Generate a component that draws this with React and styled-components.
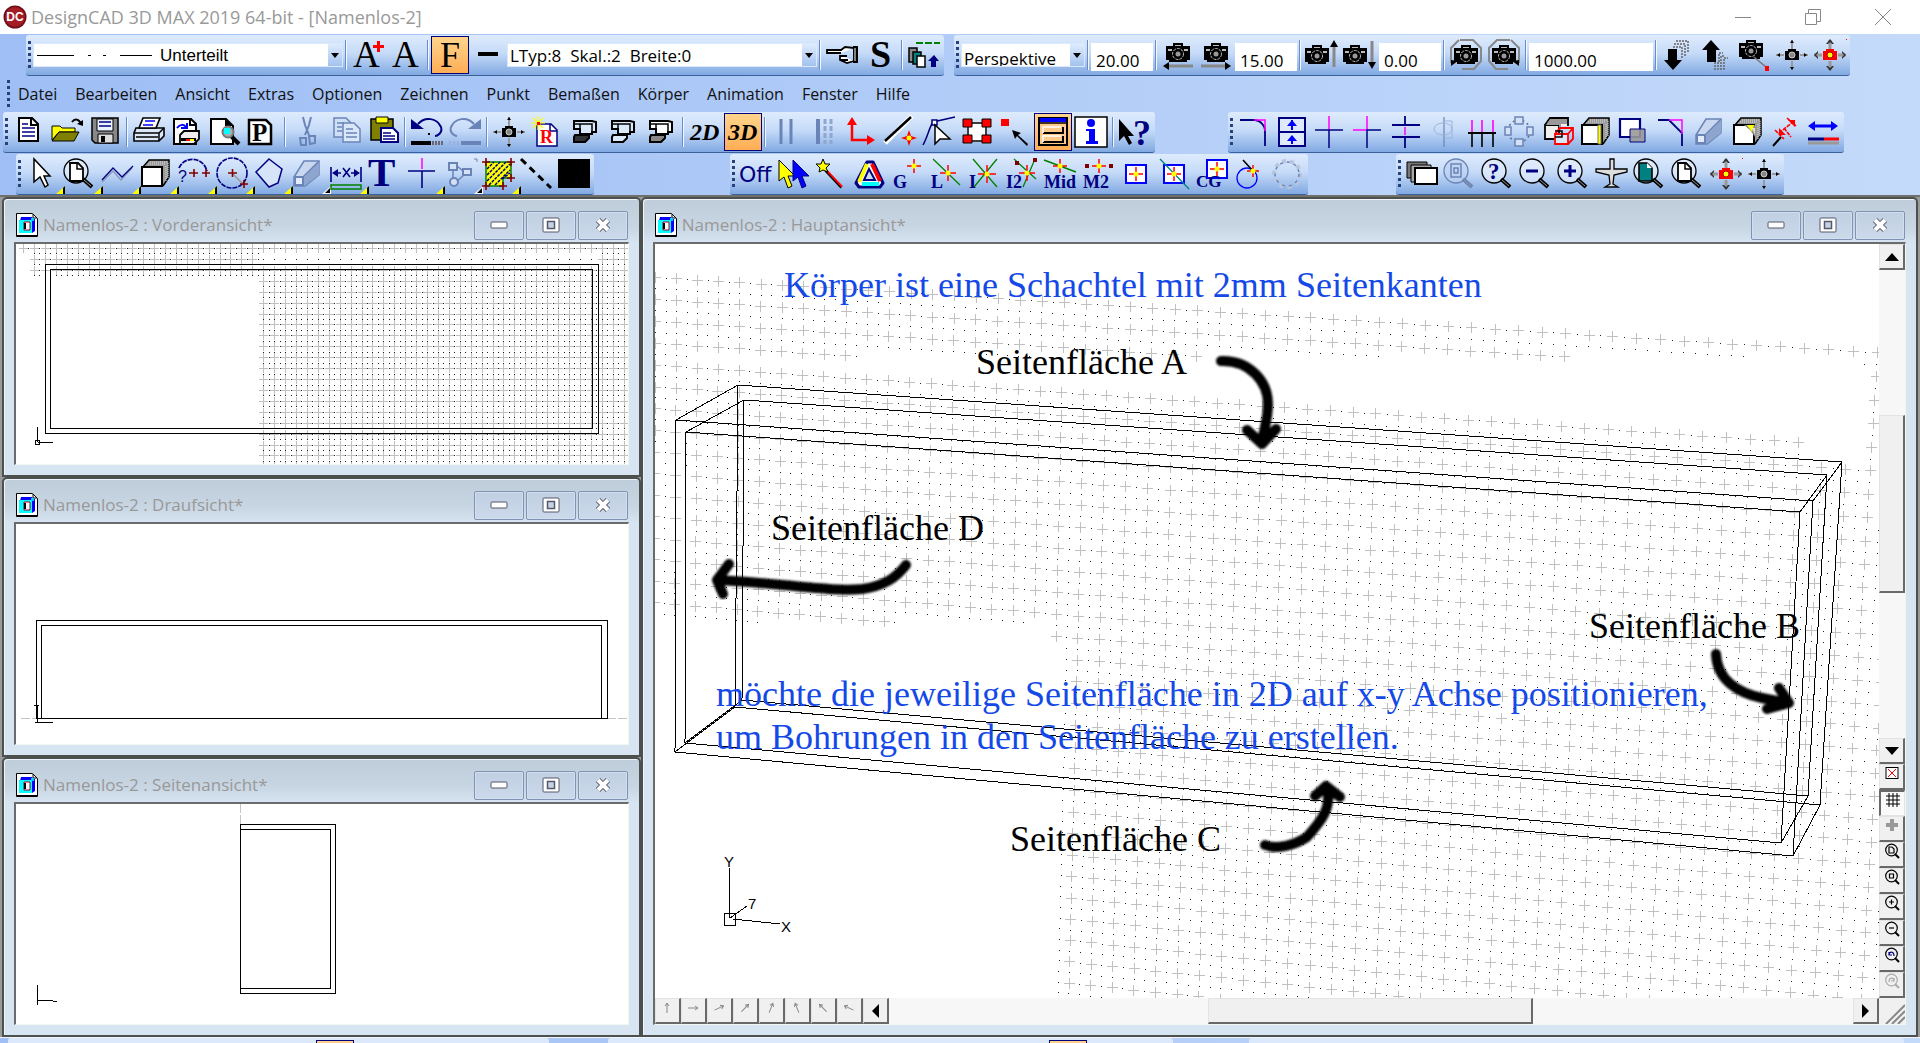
import React from 'react';
import styled, { createGlobalStyle, css } from 'styled-components';

const GlobalStyle = createGlobalStyle`
  html, body, #root {
    height: 100%;
    margin: 0;
  }
  body {
    overflow: hidden;
    font-family: "Open Sans", "Noto Sans", sans-serif;
    font-size: 17px;
    color: #000;
  }
  * {
    box-sizing: border-box;
  }
  button, input, select {
    font: inherit;
    color: inherit;
    padding: 0;
    margin: 0;
    border: 0;
    border-radius: 0;
    background: none;
  }
`

/* ---------- layout ---------- */

const Shell = styled.div`
  display: flex;
  flex-direction: column;
  height: 100vh;
  background: linear-gradient(90deg, #9ebef5, #c4dafa);
`

const TitleBar = styled.header`
  display: flex;
  align-items: center;
  flex: none;
  height: 34px;
  padding: 0 2px 0 3px;
  background: #fff;
  color: #999;
`

const AppTitle = styled.h1`
  flex: 1;
  margin: 0 0 0 4px;
  font-size: 18px;
  font-weight: 400;
  line-height: 24px;
  white-space: nowrap;
`

const TitleButton = styled.button`
  display: flex;
  align-items: center;
  justify-content: center;
  width: 70px;
  height: 34px;
`

const BarRow = styled.div`
  display: flex;
  flex: none;
  height: 42px;
  padding: 1px 0 0 ${p => p.$indent}px;
`

const Toolbar = styled.div`
  display: flex;
  align-items: center;
  flex: none;
  height: 41px;
  margin-right: ${p => p.$after || 0}px;
  padding-right: 1px;
  border-bottom: 1px solid #3b619c;
  border-radius: 3px;
  background: linear-gradient(#deebfd, #c6dbf8 45%, #81a9e2);
`

const Grip = styled.span`
  flex: none;
  width: 3px;
  height: 28px;
  margin: 0 2px;
  background: repeating-linear-gradient(#27417b 0 3px, transparent 3px 6px);
`

const Sep = styled.span`
  flex: none;
  width: 2px;
  height: 30px;
  margin: 0 2px;
  background: linear-gradient(90deg, #6a8ccb 50%, #f1f9ff 50%);
`

const ToolButton = styled.button`
  position: relative;
  display: flex;
  align-items: center;
  justify-content: center;
  flex: none;
  width: 38px;
  height: 38px;
  ${p => p.$active && css`
    border: 1px solid #000080;
    background: linear-gradient(#ffd58c, #ffad55);
  `}
`

const Corner = styled.svg`
  position: absolute;
  right: -4px;
  bottom: -1px;
`

const MenuBar = styled.nav`
  display: flex;
  align-items: center;
  flex: none;
  gap: 18px;
  height: 35px;
  padding-left: 5px;
  font-size: 16px;
`

const MenuItem = styled.a`
  color: #111;
  line-height: 24px;
  text-decoration: none;
  &:first-of-type {
    margin-left: -12px;
  }
`

const Combo = styled.div`
  display: flex;
  align-items: center;
  flex: none;
  width: ${p => p.$width}px;
  height: 24px;
  padding: 0 0 0 2px;
  border: 1px solid #d9e8fb;
  background: #fff;
  overflow: hidden;
  font-family: ${p => p.$arial ? '"Liberation Sans", sans-serif' : 'inherit'};
`

const ComboSelect = styled.select`
  flex: 1;
  min-width: 0;
  height: 22px;
  padding-top: ${p => p.$low ? 6 : 0}px;
  padding-left: ${p => p.$pad || 0}px;
  appearance: none;
  outline: none;
  ${p => p.$low && css`
    height: 30px;
  `}
`

const ComboArrow = styled.span`
  display: flex;
  align-items: center;
  justify-content: center;
  flex: none;
  width: 14px;
  height: 22px;
  background: linear-gradient(#deebfd, #a3c2ef);
`

const NumberBox = styled.input`
  flex: none;
  width: ${p => p.$width}px;
  height: 28px;
  padding: 6px 0 0 4px;
  border: 1px solid #fff;
  background: #fff;
  align-self: flex-end;
  margin-bottom: 4px;
  outline: none;
`

const Mdi = styled.main`
  display: grid;
  grid-template-columns: 1fr 2fr;
  flex: 1;
  min-height: 0;
  padding: 0 2px;
  border-top: 2px solid #6f6f6b;
  border-bottom: 1px solid #f0f4fa;
  background: #9a9a9a;
`

const SideViews = styled.div`
  display: grid;
  grid-template-rows: repeat(3, 1fr);
  min-height: 0;
`

const Frame = styled.section`
  display: flex;
  flex-direction: column;
  min-width: 0;
  min-height: 0;
  padding: 0 10px 10px;
  border: 2px solid #4d514d;
  border-radius: 5px 5px 0 0;
  background: linear-gradient(#bfcddb, #c8d5e2 28px, #d7e4f2 44px);
  box-shadow: inset 1px 1px 0 #eef4fa;
`

const FrameTitle = styled.div`
  display: flex;
  align-items: center;
  flex: none;
  gap: 2px;
  height: 43px;
  padding: 9px 1px 0 2px;
`

const FrameName = styled.h2`
  flex: 1;
  margin: 0 0 0 3px;
  color: #999;
  font-size: 17px;
  font-weight: 400;
  line-height: 24px;
  white-space: nowrap;
`

const FrameButton = styled.button`
  display: flex;
  align-items: center;
  justify-content: center;
  width: 50px;
  height: 29px;
  border: 1px solid #8093b4;
  border-radius: 2px;
  background: linear-gradient(#c0cfe2, #cbd9ea);
  box-shadow: inset 0 0 0 1px #d3dfee;
`

const Sunken = styled.div`
  flex: 1;
  display: grid;
  grid-template-columns: ${p => p.$scroll ? 'minmax(0, 1fr) 26px' : 'minmax(0, 1fr)'};
  grid-template-rows: ${p => p.$scroll ? 'minmax(0, 1fr) 26px' : 'minmax(0, 1fr)'};
  min-height: 0;
  border: solid;
  border-width: 2px 1px 1px 2px;
  border-color: #6b6b6b #f4f4f4 #f4f4f4 #6b6b6b;
  background: #fff;
`

const Canvas = styled.svg`
  display: block;
  width: 100%;
  height: 100%;
  overflow: hidden;
`

const Note = styled.text`
  font-family: "Liberation Serif", serif;
  font-size: 36px;
  fill: ${p => p.$blue ? '#1449e8' : '#000'};
`

const AxisLetter = styled.text`
  font-family: "Liberation Sans", sans-serif;
  font-size: 15px;
`

const ScrollColumn = styled.div`
  display: flex;
  flex-direction: column;
  min-height: 0;
`

const ScrollRow = styled.div`
  display: flex;
  min-width: 0;
`

const Track = styled.div`
  display: grid;
  flex: 1;
  grid-template-columns: ${p => p.$vertical ? '1fr' : '320fr 325fr 320fr'};
  grid-template-rows: ${p => p.$vertical ? '145fr 178fr 145fr' : '1fr'};
  background: #f7f7f7;
`

const Thumb = styled.div`
  grid-column: ${p => p.$vertical ? 1 : 2};
  grid-row: ${p => p.$vertical ? 2 : 1};
  border: solid;
  border-width: 1px 2px 2px 1px;
  border-color: #e3e3e3 #696969 #696969 #e3e3e3;
  background: #f0f0f0;
`

const ScrollButton = styled.button`
  display: flex;
  align-items: center;
  justify-content: center;
  flex: none;
  width: 26px;
  height: 26px;
  padding-bottom: ${p => p.$raise || 0}px;
  border: solid;
  border-width: 1px 2px 2px 1px;
  border-color: #e3e3e3 #696969 #696969 #e3e3e3;
  background: #f0f0f0;
  ${p => p.$pressed && css`
    border-width: 2px 1px 1px 2px;
    border-color: #696969 #e3e3e3 #e3e3e3 #696969;
    background: #fafafa;
  `}
`

const SizeGrip = styled.div`
  display: flex;
  align-items: flex-end;
  justify-content: flex-end;
  background: #f0f0f0;
`

const NextBars = styled.footer`
  display: flex;
  flex: none;
  height: 5px;
  padding: 0 16px 0 8px;
`

const NextBar = styled.div`
  flex: ${p => p.$grow} 1 0;
  display: flex;
  align-items: flex-end;
  margin-right: ${p => p.$after || 0}px;
  border-radius: 3px 3px 0 0;
  background: #dce9fc;
`

const NextActive = styled.span`
  width: 38px;
  height: 3px;
  margin-left: ${p => p.$at}%;
  border: 1px solid #000080;
  border-bottom: 0;
  background: #ffd08a;
`

/* ---------- icons, all drawn in a 32x32 box ---------- */

const NAVY = '#000080'
const OFF = '#6b84b8'

const L = ({ d, c = '#000', w = 2, f = 'none', ...rest }) => (
  <path d={d} stroke={c} strokeWidth={w} fill={f} {...rest} />
)

const T = ({ x, y, s, c = '#000', font = 'Liberation Serif', ...rest }) => (
  <text x={x} y={y} fontSize={s} fill={c} fontFamily={`"${font}", serif`} {...rest}>{rest.children}</text>
)

const Star = ({ x, y, r = 8 }) => (
  <>
    <L d={`M${x - r} ${y}H${x + r}M${x} ${y - r}V${y + r}`} c="#f00" w={1.5} />
    <circle cx={x} cy={y} r="2.5" fill="#ff0" />
  </>
)

const Camera = ({ x = 4, y = 4 }) => (
  <g transform={`translate(${x} ${y})`}>
    <path d="M7 0h10v3h7v14h-3v2H3v-2H0V3h7z" />
    <path d="M9 2h6v1H9zM2 6h4v2H2zM18 6h4v2h-4z" fill="#bbb" />
    <circle cx="12" cy="11" r="5.5" fill="none" stroke="#bbb" strokeDasharray="3 1" />
    <circle cx="12" cy="11" r="2.5" fill="#999" />
  </g>
)

const MoveCamera = ({ red }) => (
  <>
    <L d="M16 1v9M16 22v9M0 16h8M24 16h8" c="#999" w={red ? 3 : 2} />
    {red
      ? <path d="M12 5l4-5 4 5h-2l-2-2-2 2zM12 27l4 5 4-5h-2l-2 2-2-2zM4 12l-4 4 4 4v-2l-2-2 2-2zM28 12l4 4-4 4v-2l2-2-2-2z" fill="#333" />
      : <path d="M14 4l2-3 2 3zM14 28l2 3 2-3zM4 14l-3 2 3 2zM28 14l3 2-3 2z" />}
    <path d="M9 12h3v-2h8v2h3v9H9z" fill={red ? '#f00' : '#000'} />
    <circle cx="16" cy="16" r="3" fill={red ? '#ff0' : '#888'} stroke={red ? '#a00' : '#ccc'} />
  </>
)

const Lens = ({ c = '#000', f = '#e6f0fd', children }) => (
  <>
    <circle cx="12" cy="13" r="12" fill={f} fillOpacity="0.6" stroke={c} strokeWidth="1.3" />
    {children}
    <L d="M19 21l9 8" c={c} w={4} />
    <L d="M20 22l7 6" c="#999" w={1} />
  </>
)

const Plates = ({ back = '#dce9fb', front = '#dce9fb' }) => (
  <>
    <path d="M5 5h18l4 1v10h-4v2H11v-5H5z" fill={back} stroke="#000" strokeWidth="2" />
    <L d="M5 8h18v10M11 8v5" w={1.5} />
    <path d="M6 19h14v3l-4 4H5v-5z" fill={front} stroke="#000" strokeWidth="2" />
  </>
)

const Cube = ({ f = '#fff', children }) => (
  <>
    <path d="M3 9L9 2h20v17l-6 9" fill="#999" stroke="#000" strokeWidth="1.5" />
    <L d="M10 4h18M8 6h18M26 8v15M28 5v15" c="#ddd" w={1} strokeDasharray="1 1" />
    <L d="M2 9h20v19H2z" f={f} />
    {children}
  </>
)

const Wedge = () => (
  <>
    <path d="M2 19L12 3h15v14l-14 11H2z" fill="#c9d8ee" stroke={OFF} strokeWidth="1.5" />
    <path d="M12 19L27 3v14L12 28z" fill="#8da5cf" />
    <L d="M3 19h8v8H3z" c={OFF} w={2} f="#e0eafa" />
    <L d="M11 19L27 3" c={OFF} w={1.5} />
  </>
)

const icons = {
  fontPlus: <><T x="1" y="28" s="37">A</T><path d="M21 6h4V2h3v4h4v3h-4v4h-3v-4h-4z" fill="#f00" /></>,
  font: <T x="2" y="28" s="37">A</T>,
  fontF: <T x="6" y="28" s="36">F</T>,
  dash: <L d="M6 15h20" w={4} />,
  hand: <><L d="M28 9l-9-1-4 3H1v3h14M28 22l-7 2-7-3v-5M14 17h7M15 21h7" f="#fff" w={1.8} /><path d="M27 7h5v17h-5z" /><L d="M29 9v13" c="#fff" w={1} /></>,
  bigS: <T x="6" y="28" s="38" fontWeight="700">S</T>,
  layers: (
    <>
      <L d="M8 4h24" c="#008000" w={2} strokeDasharray="7 2" />
      <L d="M1 9h8v14H1z" w={1.5} f="#888" /><L d="M5 13h8v12H5z" w={1.5} f="#008080" /><L d="M9 17h8v11H9z" w={1.5} f="#fff" />
      <path d="M26 16l5 6h-3v6h-5v-6h-3z" fill={NAVY} />
    </>
  ),
  camLeft: <><Camera /><L d="M5 27h26" c="#888" w={3} /><path d="M7 23v8l-6-4z" /></>,
  camRight: <><Camera /><L d="M1 27h26" c="#888" w={3} /><path d="M25 23v8l6-4z" /></>,
  camUp: <><Camera x="-1" y="6" /><L d="M28 6v22" c="#888" w={3} /><path d="M24 8h8l-4-7z" /></>,
  camDown: <><Camera x="-1" y="6" /><L d="M28 2v22" c="#888" w={3} /><path d="M24 23h8l-4 7z" /></>,
  orbitL: <><L d="M10 1h13l8 8v13l-7 8H12M1 24V9l8-8" c="#888" w={2} /><Camera x="4" y="6" /><path d="M1 27v-6l7 1z" /></>,
  orbitR: <><L d="M22 1H9L1 9v13l7 8h12M31 24V9l-8-8" c="#888" w={2} /><Camera x="4" y="6" /><path d="M31 27v-6l-7 1z" /></>,
  backward: <><L d="M14 2h12v12M12 5h11v12M11 8h9v11" c="#666" w={1.5} strokeDasharray="2 1" /><path d="M6 10h9v11h5l-9 10-9-10h4z" /></>,
  forward: <><L d="M14 30h10V19h4M14 27h7V17h4M14 24h5V14h4" c="#666" w={1.5} strokeDasharray="2 1" /><path d="M11 1l9 10h-4v12H7V11H2z" /></>,
  camTarget: <><Camera x="1" y="1" /><L d="M16 18l12 10" c="#777" w={1.5} /><path d="M27 27h4v5h-4z" fill="#f00" /></>,
  moveCam: <MoveCamera />,
  moveCamRed: <><MoveCamera red /><path d="M32 0h1v1h-1z" fill="#f00" /></>,

  newDoc: <><L d="M6 2h13l6 6v17H6z" f="#fff" w={2} /><L d="M18 2v7h7" w={2} /><L d="M9 8h6M9 12h13M9 16h13M9 20h13" c={NAVY} w={1.6} /></>,
  open: (
    <>
      <path d="M1 24V10h8l2 2h13v4H8z" fill="#ff0" stroke="#000" />
      <path d="M1 25l7-9h20l-5 9z" fill="#808000" stroke="#000" />
      <L d="M21 6c3-4 7-3 9 2" w={2} /><path d="M26 8l6-4v6z" />
    </>
  ),
  save: <><path d="M3 2h26v25H6l-3-3z" fill="#888" stroke="#000" strokeWidth="1.5" /><path d="M8 3h16v12H8z" fill="#e8f1fd" stroke="#000" /><L d="M10 6h12M10 10h12" c={NAVY} w={1.6} /><path d="M9 18h15v9H9z" fill="#ddd" stroke="#000" /><path d="M12 20h4v6h-4z" /></>,
  print: <><L d="M3 12h24l4 0v8l-5 5H1v-8z" f="#dce8f8" w={1.6} /><L d="M10 2h17l-4 10H6z" f="#fff" w={1.6} /><L d="M12 5h10M10 9h10" c="#00f" w={1.6} /><L d="M1 17h25v8M26 17l5-5M3 21h22" w={1.5} /></>,
  printDoc: <><L d="M3 3h17l5 5v20H3z" f="#fff" /><L d="M19 3v6h6" /><L d="M6 12c3-4 7-4 9-1M16 7v5h-6" c="#00f" w={2} /><path d="M9 19l4-4h15v8l-5 5H9z" fill="#eee" stroke="#000" strokeWidth="1.8" /><path d="M10 22h15v3H10z" /><path d="M15 23h4v2h-4z" fill="#f00" /><path d="M19 23h4v2h-4z" fill="#ff0" /></>,
  preview: <><L d="M2 3h15l7 7v18H2z" f="#fff" /><path d="M16 3v7h8z" /><L d="M22 20l8 8" w={4} /><circle cx="19" cy="16" r="5.5" fill="#aaa" stroke="#777" strokeWidth="2" /><path d="M15 12h6v6h-6z" fill="#0ff" /></>,
  plot: <><L d="M2 4h17l5 5v19H2z" f="#fff" w={2.5} /><T x="5" y="25" s="25" fontWeight="700">P</T></>,
  cut: <><L d="M12 1l2 8 4 10M20 1l-2 8-4 10" c={OFF} w={2} /><L d="M9 22h6v7h-5zM18 20h6v7l-5 1z" c={OFF} w={2} /></>,
  copy: <><path d="M5 2h12l5 5v14H5z" fill="#cfe0f6" stroke={OFF} strokeWidth="1.5" /><path d="M14 7h11l6 6v13H14z" fill="#dae7fa" stroke={OFF} strokeWidth="1.5" /><L d="M8 7h7M8 11h5M8 15h5M17 13h7M17 17h11M17 21h11" c={OFF} w={1.5} /></>,
  paste: <><path d="M4 3h22v21H4z" fill="#808000" stroke="#000" strokeWidth="1.5" /><path d="M9 1h12v6H9z" fill="#ff0" stroke="#000" /><path d="M14 12h12l5 5v9H14z" fill="#fff" stroke={NAVY} strokeWidth="2" /><L d="M16 17h8M16 20h12M16 23h12" c={NAVY} w={1.5} /></>,
  undo: <><path d="M0 3v10h13z" fill={NAVY} /><L d="M7 8c7-8 19-6 23 3 2 6-4 9-6 9" c={NAVY} w={2} /><path d="M17 17h2v2h-2z" /><L d="M0 27h20" w={4} /><L d="M21 27h11" w={4} strokeDasharray="2 1" c="#667" /></>,
  redo: <><path d="M32 3v10H19z" fill={OFF} /><L d="M25 8C18 0 6 2 2 11c-2 6 4 9 6 9" c={OFF} w={2} /><L d="M12 27h20" w={4} c={OFF} /><L d="M0 27h11" w={4} strokeDasharray="2 2" c="#9ab1dc" /></>,
  newR: <><path d="M6 8h14l6 6v16H6z" fill="#fff" stroke={NAVY} strokeWidth="1.5" /><L d="M19 8v7h7" c={NAVY} w={1.5} /><T x="9" y="27" s="18" c="#f00" fontWeight="700">R</T><L d="M0 7h14M7 0v14M2 2l10 10M12 2L2 12" c="#ff0" w={1.2} /><path d="M6 6h3v3H6z" fill="#f00" /></>,
  cycleA: <Plates front="#333" />,
  cycleB: <Plates />,
  cycleC: <Plates back="#fff" front="#888" />,
  twoD: <T x="1" y="24" s="24" fontWeight="700" fontStyle="italic">2D</T>,
  threeD: <T x="1" y="24" s="24" fontWeight="700" fontStyle="italic">3D</T>,
  bars: <L d="M10 3v25M20 3v25" c={OFF} w={3} />,
  barsDash: <><L d="M9 3v25" c={OFF} w={4} /><L d="M16 3v25M22 3v25" c="#8fa6d0" w={3} strokeDasharray="5 2" /></>,
  ucs: <><L d="M5 6v18h20" c="#f00" w={2.5} /><path d="M0 9h10L5 1zM20 19v10l8-5z" fill="#f00" /></>,
  lineStar: <><L d="M0 27L27 0" c="#fff" w={5} /><L d="M0 25L26 1" w={2.5} /><path d="M24 14l2 6 6 2-6 2-2 6-2-6-6-2 6-2z" fill="#f00" /><circle cx="24" cy="22" r="2.5" fill="#ff0" /></>,
  pickPoint: <><L d="M0 29C5 20 6 12 10 6l22-5" c={NAVY} w={1.5} /><L d="M9 4h5v5H9z" c={NAVY} w={1.5} f="#fff" /><path d="M12 9v19l5-5h10z" fill="#fff" stroke="#000" strokeWidth="1.5" /></>,
  nodes: <><path d="M6 6h20v20H6z" fill="#fff" /><L d="M6 7h20M6 25h20M7 6v20M25 6v20" w={1.5} /><path d="M2 3h9v8H2zM21 3h9v8h-9zM2 19h9v8H2zM21 19h9v8h-9z" fill="#f00" stroke="#000" /></>,
  pointArrow: <><path d="M2 3h8v7H2z" fill="#f00" /><path d="M13 14l9 3-3 2 10 9-1 2-10-10-2 3z" /></>,
  infoBox: <><L d="M2 2h28v27H2z" f="#ffc98a" /><path d="M3 2h26v4H3z" fill="#00f" /><L d="M1 7h30" w={1.5} /><L d="M6 17h20v-6M6 26h20v-6" /><L d="M6 17v-6h18M6 26v-6h18" c="#fff" w={1.5} /></>,
  info: <><L d="M0 1h32v30H0z" f="#fff" w={1.5} /><circle cx="16" cy="7" r="4" fill="#00f" /><path d="M11 13h9v12h3v3H11v-3h3V15h-3z" fill="#00f" /></>,
  help: <><path d="M0 3v22l5-5 5 9 3-2-4-7h6z" /><T x="14" y="29" s="36" c={NAVY} fontWeight="700">?</T></>,

  fillet: <><L d="M2 4h15c6 1 9 4 10 10v16" c={NAVY} w={1.8} /><L d="M16 4h11v11" c="#f0f" w={1.5} /></>,
  stretch: <><L d="M3 2h26v28H3zM3 16h26" c={NAVY} w={2} f="#deeafb" /><L d="M16 4v10M16 20v8" c="#00f" w={2} /><path d="M11 10h10l-5-6zM11 25h10l-5-6z" fill="#00f" /></>,
  trimT: <><L d="M15 0v14" c="#f0f" w={1.5} /><L d="M1 14h28" c={NAVY} w={1.5} /><L d="M15 14v18" c={NAVY} w={1.5} /></>,
  trimX: <><L d="M15 0v14M1 14h13" c="#f0f" w={1.5} /><L d="M15 32V14h14" c={NAVY} w={1.5} /></>,
  trimH: <><L d="M2 9h28M2 21h28M15 0v9M15 21v11" c={NAVY} w={1.8} /><L d="M15 11v8" c="#f0f" w={1.5} /></>,
  mirror: <><L d="M16 1v30" c={OFF} w={1.2} /><ellipse cx="15" cy="13" rx="9" ry="6" fill="none" stroke="#9db3da" /><L d="M16 5h8v17h-8" c="#9db3da" w={1} /></>,
  trimMany: <><L d="M6 4v12M16 4v12M27 4v12" c="#f0f" w={1.6} /><L d="M2 17h28" w={2} /><L d="M6 17v14M16 17v14M27 17v14" w={1.6} /></>,
  ring: <><circle cx="15" cy="15" r="11" fill="none" stroke="#5a6b90" strokeWidth="1.5" strokeDasharray="2 3" /><path d="M11 1h8v7h-8zM11 23h8v7h-8zM1 11h6v8H1zM23 11h6v8h-6z" fill="#d5e2f5" stroke={OFF} strokeWidth="1.5" /></>,
  cubesRed: <><path d="M3 9l5-7h18v8M3 9h14v14H3z" fill="#eee" stroke="#000" strokeWidth="1.8" /><path d="M8 3h17v5h-6v6h-2V9H4z" fill="#999" /><L d="M13 18h13v10H13z" c="#f00" w={1.8} f="#dbe8fa" /><L d="M13 18l5-6h13v11l-5 5M26 18l5-6" c="#f00" w={1.8} /><L d="M13 15h7v6h-7" w={1.5} /></>,
  cubeY: <Cube><path d="M18 9h3v19h-3z" fill="#ff0" stroke="#777" /></Cube>,
  squares: <><L d="M2 3h20v18H2z" c={NAVY} w={2.2} f="#fff" /><path d="M12 13h15v13H12z" fill="#999" fillOpacity="0.9" stroke={NAVY} /></>,
  chamfer: <><L d="M2 4h11l13 13v13" c={NAVY} w={1.8} /><L d="M13 4h13v14" c="#f0f" w={1.5} /></>,
  wedge: <Wedge />,
  cubeCut: <Cube><path d="M12 9h11v12l-5-7z" fill="#888" /><path d="M15 9h7l-2 7z" fill="#ff0" /><path d="M20 12h3v7z" fill="#ddd" /></Cube>,
  measure: <><L d="M3 30l8-9" w={2} /><L d="M5 14l9 9M17 2l9 8M9 17L24 5M14 12l7 9" c="#f00" w={1.6} strokeDasharray="4 1" /><path d="M18 4h7v7zM9 12v7h7z" fill="#f00" /></>,
  scaleLine: <><L d="M5 10h20" c="#00f" w={3} /><path d="M7 5v10l-7-5zM23 5v10l7-5z" fill="#00f" /><L d="M0 23h16" c={NAVY} w={3} /><L d="M16 23h15" c="#f00" w={3} /><L d="M0 27h31" c="#999" w={3} /></>,

  pointer: <path d="M8 1v23l6-5 5 10 3-2-4-9h6z" fill="#fff" stroke="#000" strokeWidth="1.5" />,
  pageZoom: <Lens><L d="M6 5h8l5 5v13H6z" f="#fff" w={1.8} /><L d="M13 5v6h6" w={1.5} /></Lens>,
  poly: <><L d="M0 24l11-11 8 9L30 10" c="#8899bb" w={1.5} /><L d="M0 22l11-12 9 9L31 8" c={NAVY} w={1.3} /></>,
  cube: <Cube />,
  arc: <><L d="M1 10C6-2 25-2 29 13" c={NAVY} w={1.8} strokeDasharray="5 1" /><T x="0" y="24" s="16" c={NAVY} font="Liberation Sans">?</T><L d="M11 15h9M16 11v8M24 15h8M28 11v8" c="#800000" w={1.6} /></>,
  circle: <><circle cx="16" cy="15" r="15" fill="none" stroke={NAVY} strokeWidth="1.6" strokeDasharray="5 1" /><L d="M16 15l11 11" c="#999" w={1.5} /><L d="M12 15h9M16.500 11v8M24 26h8M28 22v8" c="#800000" w={1.6} /></>,
  rhomb: <L d="M15 1l13 10-4 14-9 4L2 14z" c={NAVY} w={1.5} f="#d5e4f9" />,
  dimension: <><L d="M1 9v15M31 9v15M4 15h7M21 15h7" c={NAVY} w={1.6} /><path d="M2 15l6-4v8zM30 15l-6-4v8z" fill={NAVY} /><L d="M13 10l7 9M20 10l-7 9" c={NAVY} w={1.6} /><L d="M1 27h30v4H1z" c="#008000" w={1.5} /></>,
  text: <T x="0" y="28" s="41" c={NAVY} fontWeight="700">T</T>,
  cross: <><L d="M16 0v11" c="#f0f" w={1.5} /><L d="M2 13h27M16 13v17" c={NAVY} w={1.6} /></>,
  graph: <><path d="M5 5h8v7H5zM19 11h8v6h-8z" fill="#d5e2f5" stroke={OFF} strokeWidth="2" /><circle cx="10" cy="24" r="4" fill="#d5e2f5" stroke={OFF} strokeWidth="2" /><L d="M13 8l6 5M20 17l-7 6M9 12v9" c={OFF} w={1.5} /><L d="M30 1h3v3" c={OFF} w={1} /></>,
  hatch: <><path d="M4 4h25v16h-8v8H4z" fill="#ff0" stroke="#008000" strokeWidth="1.5" /><L d="M5 11l7-7M5 17L18 4M5 23L24 4M7 27L28 6M13 27l15-15M20 21l8-6" c={NAVY} w={1.5} strokeDasharray="3 1" /><L d="M0 4h8M4 0v8M25 4h8M29 0v8M0 28h8M4 24v8M17 28h8M21 24v8M25 20h8M29 16v8" c="#800000" w={1.6} /></>,
  dashLine: <L d="M1 1l30 29" w={3} strokeDasharray="7 5" />,
  swatch: <path d="M0 1h32v29H0z" />,

  off: <T x="-1" y="24" s="22" c={NAVY} font="DejaVu Sans">Off</T>,
  cursors: <><path d="M1 2v21l5-4 4 11 4-2-4-10h7z" fill="#ff0" stroke="#000" /><path d="M15 2v21l5-4 4 11 4-2-4-10h7z" fill="#00f" stroke={NAVY} /></>,
  wand: <><L d="M10 12l16 17" c="#f00" w={2.5} /><L d="M9 13l16 17" w={1.2} /><path d="M7 1l2 5h5l-4 4 2 4-5-2-4 2 1-4-4-4h5z" fill="#ff0" stroke="#000" /></>,
  delta: <><path d="M13 4h6l10 21-3 4H5l-3-4z" fill="#fff" stroke={NAVY} strokeWidth="3" strokeLinejoin="round" /><L d="M13 6L5 24" c="#ff0" w={4} /><L d="M18 6l8 17" c="#f00" w={4} /><L d="M8 26h17" c="#0ff" w={4} /><L d="M15 11l-5 11h11z" c={NAVY} w={2} f="#cde" /></>,
  snapG: <><Star x={22} y={8} r={7} /><T x="1" y="30" s="18" c={NAVY} fontWeight="700">G</T></>,
  snapL: <><L d="M3 1l27 26" c="#008000" w={1.3} /><Star x={18} y={15} /><T x="1" y="30" s="18" c={NAVY} fontWeight="700">L</T></>,
  snapI: <><L d="M5 1l24 28M29 1L6 29" c="#008000" w={1.3} /><Star x={19} y={16} r={9} /><T x="1" y="30" s="18" c={NAVY} fontWeight="700">I</T></>,
  snapI2: <><L d="M8 1l22 20M29 1L17 29" c="#008000" w={1.3} /><path d="M9 3h4v4H9zM27 0h4v4h-4z" fill="#800000" /><Star x={21} y={15} /><T x="0" y="30" s="18" c={NAVY} fontWeight="700">I2</T></>,
  snapMid: <><L d="M0 2l32 12" c="#008000" w={1.6} /><Star x={16} y={8} r={7} /><T x="0" y="30" s="18" c={NAVY} fontWeight="700">Mid</T></>,
  snapM2: <><path d="M3 6h4v4H3zM27 6h4v4h-4z" fill="#800000" /><Star x={17} y={8} r={7} /><T x="1" y="30" s="18" c={NAVY} fontWeight="700">M2</T></>,
  snapBox: <><L d="M6 7h20v18H6z" c="#00f" w={2} f="#fff" /><Star x={16} y={16} r={7} /></>,
  snapBoxL: <><L d="M6 7h20v18H6z" c="#00f" w={2} f="#fff" /><L d="M2 1l29 30" c="#008080" w={1.3} /><Star x={16} y={16} r={7} /></>,
  snapCG: <><L d="M11 2h20v18H11z" c="#00f" w={2} f="#fff" /><Star x={21} y={11} r={7} /><T x="0" y="29" s="17" c={NAVY} fontWeight="700">CG</T></>,
  tangent: <><circle cx="13" cy="20" r="10" fill="none" stroke="#00f" strokeWidth="1.3" /><L d="M9 2l10 11" w={1.6} /><Star x={19} y={13} r={6} /></>,
  ringOff: <><circle cx="15" cy="16" r="13" fill="none" stroke="#b9c6dc" strokeWidth="4" strokeDasharray="4 4" /><circle cx="15" cy="16" r="12" fill="none" stroke={OFF} strokeWidth="1.5" strokeDasharray="3 4" /></>,

  stack: <><path d="M1 4h20v16H1z" fill="#777" stroke="#000" /><path d="M5 7h20v17H5z" fill="#aaa" stroke="#000" /><L d="M9 10h22v16H9z" f="#fff" /></>,
  zoomOff: <Lens c={OFF} f="#bcd0ee"><L d="M7 6h10v13H7zM10 10h4v5h-4z" c={OFF} w={1.5} /></Lens>,
  zoomWhat: <Lens><T x="6" y="21" s="23" c={NAVY} fontWeight="700">?</T></Lens>,
  zoomOut: <Lens><L d="M6 13h12" c={NAVY} w={3} /></Lens>,
  zoomIn: <Lens><L d="M6 13h12M12 7v12" c={NAVY} w={3} /></Lens>,
  plane: <path d="M14 1h4v10h13v3l-13 3-1 9 5 3H9l5-3-1-9L0 14v-3h14z" fill="#ddd" stroke="#000" strokeWidth="1.3" />,
  zoomTeal: <Lens><L d="M5 5h8l5 5v13H5z" f="#008080" w={1.6} /><path d="M13 5v5h5z" fill="#fff" /></Lens>,
}

const Icon = ({ name }) => (
  <svg width="32" height="32" viewBox="0 0 32 32" overflow="visible" aria-hidden="true">{icons[name]}</svg>
)

/* '|' is a separator; a trailing '*' marks the pressed tool,
   '>' a yellow flyout corner and '~' a black one */
function Tools({ list }) {
  return list.split(' ').map((entry, i) => {
    if (entry === '|') return <Sep key={i} />
    const name = entry.replace(/[*>~]/, '')
    return (
      <ToolButton key={i} type="button" aria-label={name} $active={entry.endsWith('*')}>
        <Icon name={name} />
        {/[>~]/.test(entry) && (
          <Corner width="9" height="8">
            <path d="M0 8L9 0v8z" fill={entry.endsWith('>') ? '#ff0' : '#fff'} />
            <path d={entry.endsWith('>') ? 'M7 2l2-2v8H7z' : 'M3 7l5-5v5z'} />
          </Corner>
        )}
      </ToolButton>
    )
  })
}

const Down = () => <ComboArrow><svg width="8" height="5"><path d="M0 0h8L4 5z" /></svg></ComboArrow>

/* ---------- grids ---------- */

const cross = (x, y, r) => `M${x - r} ${y + .5}h${2 * r + 1}M${x + .5} ${y - r}v${2 * r + 1}`
const dot = (x, y) => `M${x} ${y + .5}h1`

// ground plane of the main view, seen in perspective
function perspectiveGrid() {
  let crosses = ''
  let dots = ''
  for (let j = 0; j <= 35; j += 0.5) {
    for (let i = -1; i <= 56; i += 0.5) {
      const w = 1 - 0.001396 * i + 0.00102 * j
      const x = Math.round((20.034 * i + 0.5545 * j + 676.3) / w)
      const y = Math.round((0.9078 * i + 22.329 * j + 278.3) / w)
      if (x > 1882 || y > 1000) continue
      if (y > 356 && x < 1864 && j < 4) continue
      if (j >= 4 && j < 5 && x > 1801 && x < 1864) continue
      if (y > 622 && x < 1056) continue
      if (i % 1 === 0 && j % 1 === 0) crosses += cross(x, y, 5)
      else dots += dot(x, y)
    }
  }
  return { crosses, dots }
}

function flatGrid() {
  let crosses = ''
  let dots = ''
  for (let j = 0; j <= 20; j += 0.5) {
    for (let i = 0; i <= 56; i += 0.5) {
      const x = Math.round(23 + 10.92 * i)
      const y = Math.round(248 + 10.92 * j)
      if (y > 275 && x < 260) continue
      if (y > 249 && x < 34) continue
      if (y > 249 && y < 269 && x > 258 && x < 600 && (j !== 1 || i % 1)) continue
      if (j === 1 && x > 258 && x < 600) dots += dot(x, y)
      else if (i % 1 === 0 && j % 1 === 0) crosses += cross(x, y, 4)
      else dots += dot(x, y)
    }
  }
  return { crosses, dots }
}

const mainGrid = perspectiveGrid()
const frontGrid = flatGrid()

const Grid = ({ grid }) => (
  <g shapeRendering="crispEdges" fill="none">
    <path d={grid.crosses} stroke="#c0c0c0" />
    <path d={grid.dots} stroke="#222" />
  </g>
)

const Wire = ({ d }) => <path d={d} fill="none" stroke="#000" shapeRendering="crispEdges" />

/* ---------- windows ---------- */

const DocIcon = () => (
  <svg width="22" height="24" viewBox="0 0 22 24" aria-hidden="true">
    <path d="M.5.5h16l5 5v18H.5z" fill="#fff" stroke="#000" />
    <path d="M17 1v4h4M1 22.500h20" fill="none" stroke="#000" />
    <path d="M5 4h11v4H4zM16 6h3v12l-3 2z" fill="#00f" />
    <path d="M3 7h13v13H3z" fill="#0ff" />
    <path d="M15 5h3v3h-3z" fill="#0cf" />
    <path d="M8 9h6v8H8z" fill="#fff" stroke="#a00020" />
    <path d="M8 10h2v6H8z" />
  </svg>
)

function ViewWindow({ name, scroll, children }) {
  return (
    <Frame>
      <FrameTitle>
        <DocIcon />
        <FrameName>Namenlos-2 : {name}*</FrameName>
        <FrameButton type="button" aria-label="Minimieren">
          <svg width="18" height="8"><rect x="1" y="1" width="16" height="6" rx="1" fill="#fff" stroke="#54596b" /></svg>
        </FrameButton>
        <FrameButton type="button" aria-label="Maximieren">
          <svg width="18" height="16">
            <rect x="1" y="1" width="16" height="14" rx="1" fill="#fff" stroke="#54596b" />
            <rect x="5.5" y="4.5" width="7" height="7" fill="#c6d3e4" stroke="#54596b" strokeWidth="1.5" />
          </svg>
        </FrameButton>
        <FrameButton type="button" aria-label="Schließen">
          <svg width="18" height="16">
            <path d="M4 3l10 10M14 3L4 13" stroke="#54596b" strokeWidth="6" />
            <path d="M4 3l10 10M14 3L4 13" stroke="#fff" strokeWidth="4" />
          </svg>
        </FrameButton>
      </FrameTitle>
      <Sunken $scroll={scroll}>{children}</Sunken>
    </Frame>
  )
}

const MiniLens = ({ c = '#000', children }) => (
  <svg width="16" height="16" viewBox="0 0 16 16" fill="none" stroke={c} strokeWidth="1.2">
    <circle cx="7.5" cy="7" r="5.8" />
    <path d="M11 11l4 4" strokeWidth="2" />
    {children}
  </svg>
)

const sideTools = [
  ['Schließen', <svg width="14" height="12"><rect x="1" y=".5" width="12" height="11" fill="#fff" stroke="#000" /><path d="M3 2l8 8M11 2l-8 8" stroke="#f00" /></svg>],
  ['Raster', <svg width="16" height="14"><path d="M4 0v14M8 0v14M12 0v14M1 3h14M1 7h14M1 11h14" stroke="#000" /></svg>],
  ['Verschieben', <svg width="14" height="14"><path d="M5 1h4v4h4v4H9v4H5V9H1V5h4z" fill="#999" /></svg>],
  ['Seite', <MiniLens><path d="M5 4h3l2 2v4H5z" /></MiniLens>],
  ['Fenster', <MiniLens><path d="M5.500 5h4v4h-4z" /></MiniLens>],
  ['Vergrößern', <MiniLens><path d="M5 7h5M7.500 4.500v5" /></MiniLens>],
  ['Verkleinern', <MiniLens><path d="M5 7h5" /></MiniLens>],
  ['Zoom zurück', <MiniLens><path d="M5 8c0-4 5-4 5 1M5 5v3h3" stroke={NAVY} /></MiniLens>],
  ['Zoom vor', <MiniLens c="#aaa"><path d="M10 8c0-4-5-4-5 1M10 5v3H7" /></MiniLens>],
]

// headings of the eight small direction arrows below the main view
const headings = [0, 90, 65, 45, 22, -22, -45, -65]

const Brush = ({ d }) => <path d={d} fill="none" stroke="#000" strokeWidth="10" strokeLinecap="round" strokeLinejoin="round" filter="url(#brush)" />

function MainView() {
  return (
    <ViewWindow name="Hauptansicht" scroll>
      <Canvas role="img" aria-label="Hauptansicht">
        <defs>
          <filter id="brush" x="-20%" y="-20%" width="140%" height="140%"><feGaussianBlur stdDeviation="1.3" /></filter>
        </defs>
        <g transform="translate(-655 -244)">
          <Grid grid={mainGrid} />
          <Wire d="M738 385L1842 462M744 400L1827 475M676 420L1813 501M686 432L1800 512" />
          <Wire d="M676 420L738 385M686 432L744 400M676 420L675 752M686 432L685 743M738 385L735 707M744 400L742 700" />
          <Wire d="M742 700L1808 796M735 707L1820 805M685 743L1781 843M675 752L1793 856" />
          <Wire d="M675 752L735 707M685 743L742 700M1793 856L1820 805M1781 843L1808 796" />
          <Wire d="M1813 501L1842 462M1800 512L1827 475M1842 462L1820 805M1827 475L1808 796M1813 501L1793 856M1800 512L1781 843" />
          <Wire d="M729.5 868V918M724 913h11v12h-11zM733 919L780 924M730 918L747 906" />
          <AxisLetter x="724" y="867">Y</AxisLetter>
          <AxisLetter x="781" y="932">X</AxisLetter>
          <AxisLetter x="748" y="909">7</AxisLetter>

          <Note x="784" y="297" $blue>Körper ist eine Schachtel mit 2mm Seitenkanten</Note>
          <Note x="716" y="706" $blue>möchte die jeweilige Seitenfläche in 2D auf x-y Achse positionieren,</Note>
          <Note x="716" y="749" $blue>um Bohrungen in den Seitenfläche zu erstellen.</Note>
          <Note x="976" y="374">Seitenfläche A</Note>
          <Note x="1589" y="638">Seitenfläche B</Note>
          <Note x="1010" y="851">Seitenfläche C</Note>
          <Note x="771" y="540">Seitenfläche D</Note>

          <Brush d="M1221 361C1250 360 1268 382 1268 404C1268 420 1263 432 1262 444M1247 430L1262 444L1276 429" />
          <Brush d="M906 565C896 578 884 586 862 589C830 592 790 584 719 580M729 564L717 580L723 594" />
          <Brush d="M1716 654C1717 680 1738 693 1762 698L1788 703M1779 688L1789 703L1767 709" />
          <Brush d="M1265 845C1277 850 1295 845 1307 837C1322 820 1332 808 1327 787M1315 796L1326 786L1340 797" />
        </g>
      </Canvas>
      <ScrollColumn>
        <ScrollButton type="button" aria-label="Nach oben"><svg width="14" height="8"><path d="M0 8h14L7 0z" /></svg></ScrollButton>
        <Track $vertical><Thumb $vertical /></Track>
        <ScrollButton type="button" aria-label="Nach unten"><svg width="14" height="8"><path d="M0 0h14L7 8z" /></svg></ScrollButton>
        {sideTools.map(([label, icon], i) => (
          <ScrollButton type="button" key={label} aria-label={label} $raise={8} $pressed={i === 1}>{icon}</ScrollButton>
        ))}
      </ScrollColumn>
      <ScrollRow>
        {headings.map(angle => (
          <ScrollButton type="button" key={angle} $raise={6} aria-label={`Blickrichtung ${angle}°`}>
            <svg width="16" height="16" viewBox="0 0 16 16">
              <path d="M8 13V3M6 6l2-3 2 3" fill="none" stroke="#888" transform={`rotate(${angle} 8 8)`} />
            </svg>
          </ScrollButton>
        ))}
        <ScrollButton type="button" aria-label="Nach links"><svg width="7" height="14"><path d="M7 0v14L0 7z" /></svg></ScrollButton>
        <Track><Thumb /></Track>
        <ScrollButton type="button" aria-label="Nach rechts"><svg width="7" height="14"><path d="M0 0v14l7-7z" /></svg></ScrollButton>
      </ScrollRow>
      <SizeGrip>
        <svg width="20" height="20"><path d="M1 20L20 1M7 20L20 7M13 20l7-7" stroke="#888" strokeWidth="2" /></svg>
      </SizeGrip>
    </ViewWindow>
  )
}

const menus = ['Datei', 'Bearbeiten', 'Ansicht', 'Extras', 'Optionen', 'Zeichnen', 'Punkt', 'Bemaßen', 'Körper', 'Animation', 'Fenster', 'Hilfe']

function App() {
  return (
    <Shell>
      <GlobalStyle />
      <TitleBar>
        <svg width="24" height="26" viewBox="0 0 24 26" aria-hidden="true">
          <circle cx="12" cy="13" r="11.5" fill="#6d0d18" />
          <circle cx="12" cy="13" r="10" fill="#a31c26" />
          <text x="12" y="17" textAnchor="middle" fontFamily='"Liberation Sans", sans-serif' fontWeight="700" fontSize="12" fill="#fff">DC</text>
        </svg>
        <AppTitle>DesignCAD 3D MAX 2019 64-bit - [Namenlos-2]</AppTitle>
        <TitleButton type="button" aria-label="Minimieren"><svg width="16" height="16"><path d="M0 8.500h16" stroke="#888" /></svg></TitleButton>
        <TitleButton type="button" aria-label="Wiederherstellen">
          <svg width="16" height="16"><path d="M.5 4.500h11v11H.5zM3.500 4V.5h12v12H12" fill="none" stroke="#888" /></svg>
        </TitleButton>
        <TitleButton type="button" aria-label="Schließen"><svg width="16" height="16"><path d="M0 0l16 16M16 0L0 16" stroke="#888" /></svg></TitleButton>
      </TitleBar>

      <BarRow $indent={26}>
        <Toolbar $after={10}>
          <Grip />
          <Combo $width={310} $arial>
            <svg width="116" height="3" aria-hidden="true"><path d="M1 1.500h37M52 1.500h3M67 1.500h3M84 1.500h32" stroke="#000" /></svg>
            <ComboSelect $pad={8} aria-label="Linientyp"><option>Unterteilt</option></ComboSelect>
            <Down />
          </Combo>
          <Tools list="| fontPlus font | fontF* dash" />
          <Combo $width={310}>
            <ComboSelect aria-label="Linienformat"><option>LTyp:8&nbsp; Skal.:2&nbsp; Breite:0</option></ComboSelect>
            <Down />
          </Combo>
          <Tools list="| hand bigS | layers" />
        </Toolbar>
        <Toolbar>
          <Grip />
          <Combo $width={124}>
            <ComboSelect $low aria-label="Projektion"><option>Perspektive</option></ComboSelect>
            <Down />
          </Combo>
          <Sep />
          <NumberBox $width={62} aria-label="Drehwinkel" defaultValue="20.00" />
          <Tools list="| camLeft camRight" />
          <NumberBox $width={62} aria-label="Neigung" defaultValue="15.00" />
          <Tools list="| camUp camDown" />
          <NumberBox $width={62} aria-label="Rollen" defaultValue="0.00" />
          <Tools list="| orbitL orbitR |" />
          <NumberBox $width={124} aria-label="Abstand" defaultValue="1000.00" />
          <Tools list="| backward forward camTarget moveCam moveCamRed" />
        </Toolbar>
      </BarRow>

      <MenuBar>
        <Grip />
        {menus.map(m => <MenuItem href="#" key={m}>{m}</MenuItem>)}
      </MenuBar>

      <BarRow $indent={3}>
        <Toolbar $after={73}>
          <Grip />
          <Tools list="newDoc open save | print printDoc preview plot | cut copy paste | undo redo | moveCam newR cycleA cycleB cycleC | twoD threeD* | bars barsDash ucs lineStar pickPoint nodes pointArrow infoBox* info | help" />
        </Toolbar>
        <Toolbar>
          <Grip />
          <Tools list="fillet stretch trimT trimX trimH mirror trimMany ring cubesRed cubeY squares chamfer wedge cubeCut measure scaleLine" />
        </Toolbar>
      </BarRow>

      <BarRow $indent={16}>
        <Toolbar $after={136}>
          <Grip />
          <Tools list="pointer> pageZoom> poly> cube> arc> circle> rhomb> wedge~ dimension> text cross> graph~ hatch> dashLine swatch" />
        </Toolbar>
        <Toolbar $after={88}>
          <Grip />
          <Tools list="off cursors wand delta snapG snapL snapI snapI2 snapMid snapM2 snapBox snapBoxL snapCG tangent ringOff" />
        </Toolbar>
        <Toolbar>
          <Grip />
          <Tools list="stack zoomOff zoomWhat zoomOut zoomIn plane zoomTeal pageZoom moveCamRed moveCam" />
        </Toolbar>
      </BarRow>

      <Mdi>
        <SideViews>
          <ViewWindow name="Vorderansicht">
            <Canvas role="img" aria-label="Vorderansicht">
              <g transform="translate(-16 -244)">
                <Grid grid={frontGrid} />
                <Wire d="M45.5 264.5H598.5V433.5H45.5zM50.5 269.5H592.5V428.5H50.5z" />
                <Wire d="M37.5 427V442M35.5 440.5h4v4h-4zM38 442.5H53" />
              </g>
            </Canvas>
          </ViewWindow>
          <ViewWindow name="Draufsicht">
            <Canvas role="img" aria-label="Draufsicht">
              <g transform="translate(-16 -524)">
                <path d="M21 718.5H37M607 718.5H628" stroke="#c4c4c4" strokeDasharray="9 2" shapeRendering="crispEdges" />
                <Wire d="M36.5 620.5H607.5V718.5H36.5zM41.5 718V625.5H601.5V718" />
                <Wire d="M34 705.5H39M37.5 706V722M35 722.5H53" />
              </g>
            </Canvas>
          </ViewWindow>
          <ViewWindow name="Seitenansicht">
            <Canvas role="img" aria-label="Seitenansicht">
              <g transform="translate(-16 -804)">
                <path d="M240.5 804V824" stroke="#c4c4c4" strokeDasharray="9 2" shapeRendering="crispEdges" />
                <Wire d="M240.5 824.5H335.5V993.5H240.5zM240 829.5H330.5V988.5H240" />
                <Wire d="M37.5 985V1005M37 1000.5H53M53 1001.5H57" />
              </g>
            </Canvas>
          </ViewWindow>
        </SideViews>
        <MainView />
      </Mdi>

      <NextBars>
        <NextBar $grow={541} $after={59}><NextActive $at={57} /></NextBar>
        <NextBar $grow={565} $after={76}><NextActive $at={78} /></NextBar>
        <NextBar $grow={655} />
      </NextBars>
    </Shell>
  );
}

export default App;
